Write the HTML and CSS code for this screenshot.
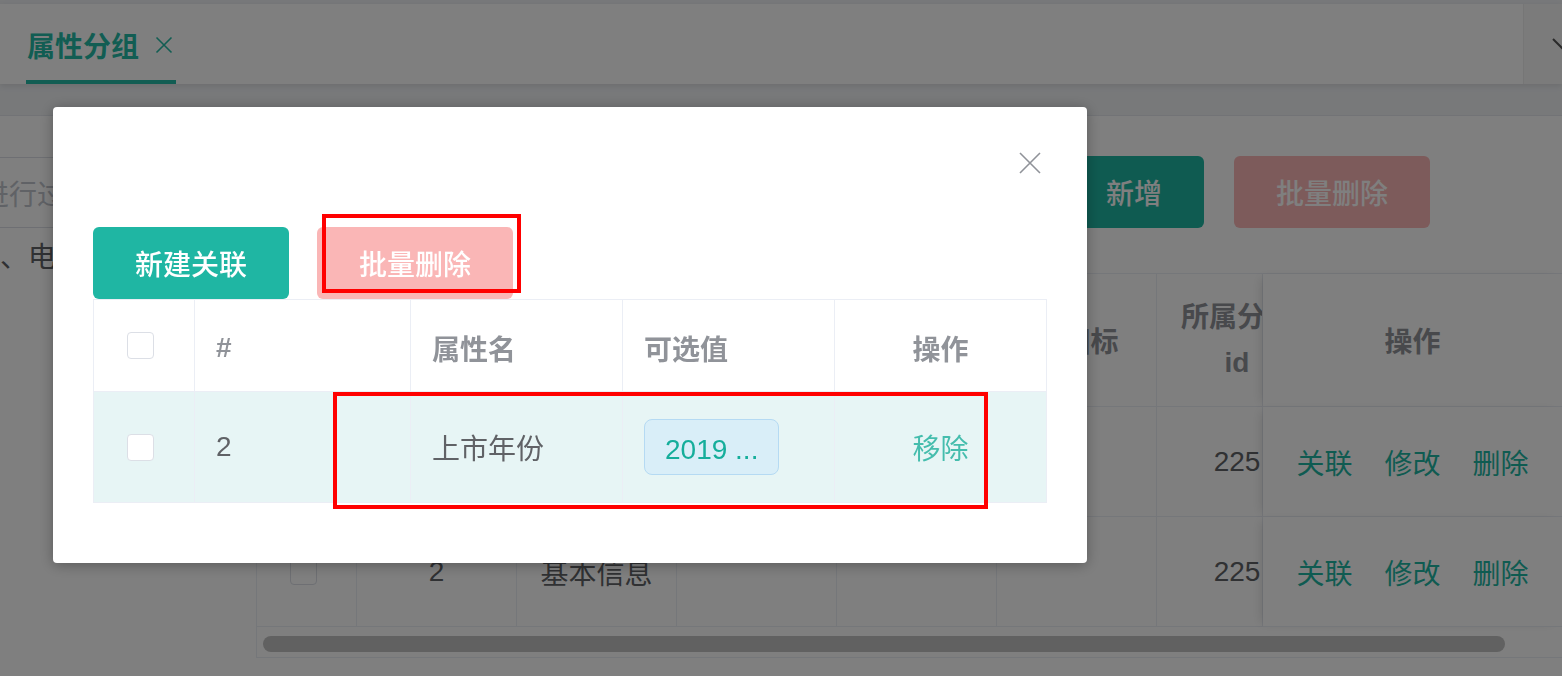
FILE: index.html
```html
<!DOCTYPE html>
<html lang="zh-CN">
<head>
<meta charset="utf-8">
<title>属性分组</title>
<link rel="stylesheet" href="styles.css">
</head>
<body>
<div class="page">
  <header class="tabs">
    <div class="tab">
      <span class="tab-title">属性分组</span>
      <svg class="tab-close" viewBox="0 0 18 18" width="18" height="18"><path d="M1.5 1.5L16.5 16.5M16.5 1.5L1.5 16.5"/></svg>
    </div>
    <div class="tabs-ctrl">
      <svg class="chev" viewBox="0 0 22 12" width="22" height="12"><path d="M1 1L11 11L21 1"/></svg>
    </div>
  </header>
  <main class="main">
    <section class="card">
      <aside class="side">
        <div class="side-inner">
          <div class="filter">输入关键字进行过滤</div>
          <div class="tree-node">手机、电子产品</div>
        </div>
      </aside>
      <div class="content">
        <div class="toolbar">
          <button class="btn btn-primary">新增</button>
          <button class="btn btn-danger">批量删除</button>
        </div>
        <div class="grid">
          <div class="gcell ghead gchk"><span class="cbx"></span></div>
          <div class="gcell ghead">分组id</div>
          <div class="gcell ghead">组名</div>
          <div class="gcell ghead">排序</div>
          <div class="gcell ghead">描述</div>
          <div class="gcell ghead">组图标</div>
          <div class="gcell ghead cut"><span class="cut-inner">所属分类id</span></div>
          <div class="gcell ghead fix">操作</div>

          <div class="gcell gchk"><span class="cbx"></span></div>
          <div class="gcell">1</div>
          <div class="gcell">主体</div>
          <div class="gcell">0</div>
          <div class="gcell">主体</div>
          <div class="gcell"></div>
          <div class="gcell cut"><span class="cut-inner">225</span></div>
          <div class="gcell fix"><a class="link">关联</a><a class="link">修改</a><a class="link">删除</a></div>

          <div class="gcell gchk"><span class="cbx"></span></div>
          <div class="gcell">2</div>
          <div class="gcell">基本信息</div>
          <div class="gcell"></div>
          <div class="gcell"></div>
          <div class="gcell"></div>
          <div class="gcell cut"><span class="cut-inner">225</span></div>
          <div class="gcell fix"><a class="link">关联</a><a class="link">修改</a><a class="link">删除</a></div>
        </div>
        <div class="hscroll"><div class="thumb"></div></div>
      </div>
    </section>
  </main>
</div>

<div class="mask">
  <div class="dialog">
    <div class="dlg-head">
      <svg class="dlg-close" viewBox="0 0 22 22" width="22" height="22"><path d="M1 1L21 21M21 1L1 21"/></svg>
    </div>
    <div class="dlg-body">
      <div class="dlg-actions">
        <button class="btn btn-primary">新建关联</button>
        <button class="btn btn-danger">批量删除</button>
      </div>
      <div class="mgrid">
        <div class="mcell mh mchk"><span class="cbx"></span></div>
        <div class="mcell mh">#</div>
        <div class="mcell mh">属性名</div>
        <div class="mcell mh">可选值</div>
        <div class="mcell mh mcenter">操作</div>

        <div class="mcell mb mchk"><span class="cbx"></span></div>
        <div class="mcell mb">2</div>
        <div class="mcell mb">上市年份</div>
        <div class="mcell mb"><span class="tag">2019 ...</span></div>
        <div class="mcell mb mcenter"><a class="remove">移除</a></div>
      </div>
    </div>
    <div class="mark mark-1"></div>
    <div class="mark mark-2"></div>
  </div>
</div>
</body>
</html>
```

FILE: styles.css
```css
* { box-sizing: border-box; }

html, body {
  margin: 0;
  height: 100%;
  overflow: hidden;
}

body {
  background: #f0f2f5;
  font-family: "Liberation Sans", "Noto Sans CJK SC", sans-serif;
  font-size: 28px;
  color: #606266;
}

.page {
  width: 1562px;
  padding-top: 4px;
}

/* ---------- tab bar ---------- */
.tabs {
  height: 80px;
  background: #fff;
  display: flex;
  box-shadow: 0 2px 6px rgba(0, 0, 0, 0.1);
}

.tab {
  margin-left: 26px;
  width: 150px;
  padding: 5px 0 0 1px;
  display: flex;
  align-items: center;
  gap: 16px;
  border-bottom: 4px solid #24bba6;
  color: #24bba6;
}

.tab-title {
  font-weight: bold;
  white-space: nowrap;
}

.tab-close {
  width: 18px;
  height: 18px;
  stroke: #24bba6;
  stroke-width: 1.6;
  fill: none;
}

.tabs-ctrl {
  margin-left: auto;
  width: 39px;
  background: #f6f6f6;
  border-left: 1px solid #ededed;
  display: flex;
  align-items: center;
  padding-left: 28px;
  overflow: hidden;
}

.chev {
  flex: none;
  stroke: #555;
  stroke-width: 2;
  fill: none;
}

/* ---------- page body ---------- */
.main {
  padding-top: 31px;
}

.card {
  background: #fff;
  border-top: 1px solid #e4e7ed;
  display: flex;
  height: 561px;
  overflow: hidden;
}

.side {
  flex: none;
  width: 256px;
  overflow: hidden;
  padding-top: 41px;
}

.side-inner {
  margin-left: -180px;
}

.filter {
  width: 420px;
  height: 71px;
  border: 1px solid #dcdfe6;
  border-radius: 4px;
  padding-left: 20px;
  display: flex;
  align-items: center;
  color: #c0c4cc;
  white-space: nowrap;
}

.tree-node {
  height: 54px;
  padding-left: 124px;
  display: flex;
  align-items: center;
  color: #606266;
  white-space: nowrap;
}

.content {
  flex: none;
  width: 1306px;
}

.toolbar {
  display: flex;
  justify-content: flex-end;
  gap: 30px;
  padding: 40px 132px 0 0;
}

.btn {
  height: 72px;
  padding: 0 42px;
  border: 0;
  border-radius: 6px;
  font: inherit;
  font-size: 28px;
  font-weight: 500;
  color: #fff;
  white-space: nowrap;
}

.btn-primary { background: #1fb6a3; }
.btn-danger { background: #fab6b6; }

/* background table */
.grid {
  margin-top: 45px;
  display: grid;
  grid-template-columns: 100px 160px 160px 160px 160px 160px 106px 300px;
  border-top: 1px solid #ebeef5;
  border-left: 1px solid #ebeef5;
}

.gcell {
  height: 110px;
  display: flex;
  align-items: center;
  justify-content: center;
  border-right: 1px solid #ebeef5;
  border-bottom: 1px solid #ebeef5;
  background: #fff;
  color: #606266;
  white-space: nowrap;
}

.ghead {
  height: 133px;
  font-weight: bold;
  color: #909399;
}

.gchk {
  justify-content: flex-start;
  padding-left: 33px;
}

.cut {
  justify-content: flex-start;
  overflow: hidden;
}

.cut-inner {
  flex: none;
  width: 120px;
  margin-left: 20px;
  text-align: center;
  white-space: normal;
  line-height: 45px;
}

.fix {
  gap: 32px;
  box-shadow: -6px 0 10px -4px rgba(0, 0, 0, 0.12);
}

.link {
  color: #1fb6a3;
}

.hscroll {
  height: 31px;
  padding: 9px 0 0 6px;
  border-left: 1px solid #ebeef5;
  border-bottom: 1px solid #ebeef5;
}

.thumb {
  width: 1242px;
  height: 16px;
  border-radius: 8px;
  background: #c2c2c2;
}

.cbx {
  display: block;
  width: 27px;
  height: 27px;
  border: 1px solid #dcdfe6;
  border-radius: 4px;
  background: #fff;
}

/* ---------- dialog ---------- */
.mask {
  position: fixed;
  inset: 0;
  background: rgba(0, 0, 0, 0.5);
}

.dialog {
  position: absolute;
  left: 53px;
  top: 107px;
  width: 1034px;
  height: 456px;
  background: #fff;
  border-radius: 4px;
  box-shadow: 0 2px 14px rgba(0, 0, 0, 0.3);
}

.dlg-head {
  height: 120px;
  display: flex;
  justify-content: flex-end;
  align-items: flex-start;
  padding: 45px 46px 0 0;
}

.dlg-close {
  stroke: #909399;
  stroke-width: 1.6;
  fill: none;
}

.dlg-body {
  padding: 0 40px;
}

.dlg-actions {
  display: flex;
  gap: 28px;
}

.mgrid {
  display: grid;
  grid-template-columns: 101px 216px 212px 212px 212px;
  border-top: 1px solid #ebeef5;
  border-left: 1px solid #ebeef5;
}

.mcell {
  display: flex;
  align-items: center;
  padding-left: 21px;
  border-right: 1px solid #ebeef5;
  border-bottom: 1px solid #ebeef5;
  white-space: nowrap;
}

.mh {
  height: 92px;
  padding-top: 4px;
  font-weight: bold;
  color: #909399;
}

.mb {
  height: 111px;
  background: #e7f5f5;
  color: #606266;
}

.mchk {
  padding-left: 33px;
}

.mh.mchk {
  padding-top: 0;
}

.mcenter {
  justify-content: center;
  padding-left: 0;
}

.tag {
  display: inline-flex;
  align-items: center;
  height: 56px;
  padding: 6px 20px 0;
  border: 1px solid #b5daf3;
  border-radius: 8px;
  background: #d9eef8;
  color: #15ae9b;
}

.remove {
  color: #45bdad;
}

.mark {
  position: absolute;
  border: 4px solid #ff0000;
}

.mark-1 {
  left: 269px;
  top: 107px;
  width: 199px;
  height: 79px;
}

.mark-2 {
  left: 280px;
  top: 285px;
  width: 655px;
  height: 117px;
}
```
